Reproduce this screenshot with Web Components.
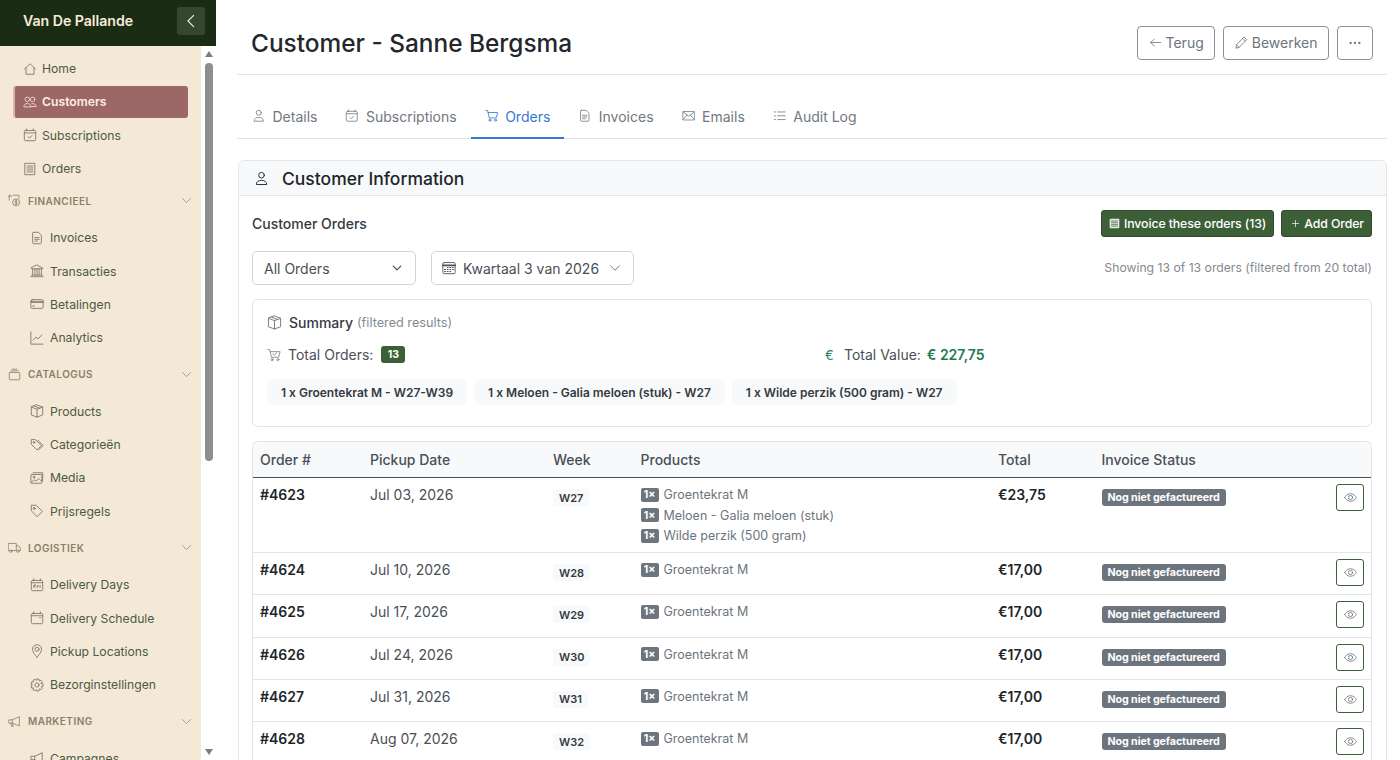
<!DOCTYPE html>
<html lang="nl">
<head>
<meta charset="utf-8">
<title>Customer - Sanne Bergsma</title>
<style>
  html, body { margin: 0; height: 100%; overflow: hidden; background: #fff; }
  body { font-family: Inter, "Liberation Sans", sans-serif; color: #212529; }
</style>
</head>
<body>
<app-shell>
  <side-bar slot="side" brand="Van De Pallande">
    <nav-item icon="house" label="Home"></nav-item>
    <nav-item icon="people" label="Customers" active></nav-item>
    <nav-item icon="calendarCheck" label="Subscriptions"></nav-item>
    <nav-item icon="receipt" label="Orders"></nav-item>
    <nav-group icon="cash" label="Financieel">
      <nav-item child icon="file" label="Invoices"></nav-item>
      <nav-item child icon="bank" label="Transacties"></nav-item>
      <nav-item child icon="card" label="Betalingen"></nav-item>
      <nav-item child icon="graph" label="Analytics"></nav-item>
    </nav-group>
    <nav-group icon="collection" label="Catalogus">
      <nav-item child icon="box" label="Products"></nav-item>
      <nav-item child icon="tags" label="Categorieën"></nav-item>
      <nav-item child icon="images" label="Media"></nav-item>
      <nav-item child icon="tag" label="Prijsregels"></nav-item>
    </nav-group>
    <nav-group icon="truck" label="Logistiek">
      <nav-item child icon="calendarDay" label="Delivery Days"></nav-item>
      <nav-item child icon="calendarEvent" label="Delivery Schedule"></nav-item>
      <nav-item child icon="geo" label="Pickup Locations"></nav-item>
      <nav-item child icon="gear" label="Bezorginstellingen"></nav-item>
    </nav-group>
    <nav-group icon="megaphone" label="Marketing">
      <nav-item child icon="megaphone" label="Campagnes"></nav-item>
    </nav-group>
  </side-bar>

  <page-header title="Customer - Sanne Bergsma">
    <out-button icon="arrowLeft" label="Terug"></out-button>
    <out-button icon="pencil" label="Bewerken"></out-button>
    <out-button icon="dots"></out-button>
  </page-header>

  <tab-bar>
    <tab-link icon="person" label="Details"></tab-link>
    <tab-link icon="calendarCheck" label="Subscriptions"></tab-link>
    <tab-link icon="cart" label="Orders" active></tab-link>
    <tab-link icon="file" label="Invoices"></tab-link>
    <tab-link icon="envelope" label="Emails"></tab-link>
    <tab-link icon="list" label="Audit Log"></tab-link>
  </tab-bar>

  <info-card title="Customer Information">
    <orders-toolbar></orders-toolbar>
    <orders-filter></orders-filter>
    <orders-summary></orders-summary>
    <orders-table>
      <order-row number="#4623" date="Jul 03, 2026" week="W27" total="€23,75" products="Groentekrat M|Meloen - Galia meloen (stuk)|Wilde perzik (500 gram)"></order-row>
      <order-row number="#4624" date="Jul 10, 2026" week="W28" total="€17,00" products="Groentekrat M"></order-row>
      <order-row number="#4625" date="Jul 17, 2026" week="W29" total="€17,00" products="Groentekrat M"></order-row>
      <order-row number="#4626" date="Jul 24, 2026" week="W30" total="€17,00" products="Groentekrat M"></order-row>
      <order-row number="#4627" date="Jul 31, 2026" week="W31" total="€17,00" products="Groentekrat M"></order-row>
      <order-row number="#4628" date="Aug 07, 2026" week="W32" total="€17,00" products="Groentekrat M"></order-row>
    </orders-table>
  </info-card>
</app-shell>

<script>
// gear outline, easier to compute than to write by hand
function gearPath(teeth) {
  const pts = [];
  for (let i = 0; i < teeth; i++) {
    const step = (Math.PI * 2) / teeth;
    const a = i * step;
    const spots = [[-0.3, 5.2], [-0.17, 7], [0.17, 7], [0.3, 5.2]];
    for (const [off, r] of spots) {
      const x = 8 + Math.cos(a + off * step * 1.6) * r;
      const y = 8 + Math.sin(a + off * step * 1.6) * r;
      pts.push(`${x.toFixed(2)} ${y.toFixed(2)}`);
    }
  }
  return `M${pts.join("L")}z`;
}

const ICONS = {
  house: '<path d="M1.8 8 8 2l6.2 6M3.4 6.6V14h9.2V6.6"/>',
  people: '<circle cx="5" cy="5" r="2.6"/><circle cx="11" cy="5" r="2.6"/><path d="M1 13.2c0-2.2 1.6-3.4 4-3.4s4 1.2 4 3.4zM10 9.9c3-.4 5 1 5 3.3h-6"/>',
  calendarCheck: '<rect x="1.5" y="2.8" width="13" height="11.7" rx="1.4"/><path d="M1.5 5.6h13M4.2 1v2M11.8 1v2M5.8 10l1.6 1.5 2.8-2.8"/>',
  receipt: '<path d="M2.5 1.5h11v13h-11z"/><path d="M4.6 4.5h6.8M4.6 6.8h6.8M4.6 9.1h6.8M4.6 11.4h6.8"/>',
  cash: '<path d="M6 1.5h7.5v4M1.5 7.5V1.5H3M.8 3.4 2.6 1.5l1.8 1.9"/><circle cx="10" cy="10.3" r="4.3"/><path d="M11 8.6c-1-.6-2.2-.2-2.2.7 0 1.3 2.4.7 2.4 2 0 .9-1.3 1.2-2.4.6M10 7.5v5.6"/>',
  file: '<path d="M4 1.5h5.6L13 4.9v8.6a1 1 0 0 1-1 1H4a1 1 0 0 1-1-1v-11a1 1 0 0 1 1-1z"/><path d="M5.5 7.5h5M5.5 9.5h5M5.5 11.5h3"/>',
  bank: '<path d="M8 1.2 14.5 4.5v1h-13v-1zM3 5.5v7M5.6 5.5v7M8 5.500v7M10.4 5.5v7M13 5.5v7M2 12.7h12M1 14.5h14"/>',
  card: '<rect x="1" y="3" width="14" height="10" rx="1.5"/><path d="M1 6.2h14M1 5h14M3 10.3h2"/>',
  graph: '<path d="M1 1v14h14M3.5 10.5 6.8 7l2.4 2 4.3-4.6"/>',
  collection: '<rect x="1.5" y="5.5" width="13" height="9" rx="1"/><path d="M3.5 3.5h9M5 1.500h6"/>',
  box: '<path d="M8 1 14.5 3.500v9L8 15l-6.500-2.500v-9z"/><path d="M1.500 3.500 8 6l6.500-2.500M8 6v9M4.800 2.300l6.400 2.500"/>',
  tags: '<path d="M1.500 2.200v5l6.500 6.500 5-5-6.500-6.500z"/><circle cx="4.500" cy="5" r="1"/><path d="M9 2.500l6 6-5 5"/>',
  images: '<rect x="1" y="4" width="12.500" height="10" rx="1"/><path d="M3.500 2h11v9.500"/><circle cx="4.500" cy="7" r="1"/><path d="M1.500 13l3.500-3 2 1.500 3-3 3 3"/>',
  tag: '<path d="M1.500 1.800v6l6.700 6.700 6-6L7.500 1.800z"/><circle cx="4.800" cy="5" r="1.200"/>',
  truck: '<path d="M.8 3h9.400v8.800H.8zM10.200 6h2.800l2.200 2.600v3.200h-5"/><circle cx="3.500" cy="12.500" r="1.500" fill="#f4e9d6"/><circle cx="12" cy="12.500" r="1.500" fill="#f4e9d6"/>',
  calendarDay: '<rect x="1.500" y="2.800" width="13" height="11.700" rx="1.400"/><path d="M1.500 5.400h13M4.200 1v2M11.800 1v2M4.500 11V8h2M4.500 9.400h1.600M8.300 11V8.800h1.500M11.500 8.500V11"/>',
  calendarEvent: '<rect x="1.500" y="2.800" width="13" height="11.700" rx="1.400"/><path d="M1.500 5.400h13M4.200 1v2M11.800 1v2M11 7.600h1"/>',
  geo: '<path d="M8 15S2.800 9.800 2.800 6a5.200 5.200 0 0 1 10.400 0C13.200 9.800 8 15 8 15z"/><circle cx="8" cy="6" r="2.300"/>',
  gear: `<circle cx="8" cy="8" r="2.400"/><path d="${gearPath(9)}"/>`,
  megaphone: '<path d="M1.500 6h3.800l8.700-4v11.500L5.300 10H1.500zM5.300 6v4M3.500 10.200l1 3.800h2L5.600 10.500"/>',
  person: '<circle cx="8" cy="4.500" r="3"/><path d="M2.500 14c0-2.800 2.400-4 5.500-4s5.500 1.200 5.500 4z"/>',
  cart: '<path d="M1 1.800h2.100l2 8.800h8.200l1.700-6.400H3.700"/><circle cx="5.800" cy="13.300" r="1.200"/><circle cx="12.400" cy="13.300" r="1.200"/>',
  cartCheck: '<path d="M1 1.800h2.100l2 8.800h8.200l1.700-6.400H3.700M6.800 6.700l1.500 1.500 2.700-2.500"/><circle cx="5.800" cy="13.300" r="1.200"/><circle cx="12.400" cy="13.300" r="1.200"/>',
  envelope: '<rect x="1" y="3" width="14" height="10" rx="1"/><path d="M1.300 3.500 8 8.600l6.700-5.100M1.300 12.500 6 7.200M14.700 12.500 10 7.200"/>',
  list: '<path d="M5.500 3.500h9M5.500 8h9M5.500 12.500h9M1.500 3.500h1.500M1.500 8h1.500M1.500 12.500h1.500"/>',
  arrowLeft: '<path d="M14.500 8H2M6.500 3.800 2 8l4.500 4.200"/>',
  pencil: '<path d="M11.500 1.500 14.500 4.500 5 14l-4 1 1-4zM9.700 3.300l3 3M2 11l3 3"/>',
  dots: '<circle cx="3" cy="8" r="1.300" fill="currentColor" stroke="none"/><circle cx="8" cy="8" r="1.300" fill="currentColor" stroke="none"/><circle cx="13" cy="8" r="1.300" fill="currentColor" stroke="none"/>',
  ledger: '<rect x="1" y="1" width="14" height="14" rx="1.500" fill="#e4ebe2" stroke="none"/><path d="M3.500 4.300h9M3.500 6.800h9M3.500 9.300h9M3.500 11.800h9" stroke="#3c5f38"/>',
  plus: '<path d="M8 3.500v9M3.500 8h9"/>',
  calendar3: '<rect x="1" y="1.800" width="14" height="12.700" rx="1.400"/><path d="M1 5h14" stroke-width="2"/><path d="M6 7.500h1M9 7.500h1M12 7.500h1M3 9.800h1M6 9.800h1M9 9.800h1M12 9.800h1M3 12h1M6 12h1M9 12h1" stroke-width="1.200"/>',
  chevronDown: '<path d="M2 5l6 6 6-6"/>',
  chevronDownBold: '<path d="M3 5.500 8 10.500l5-5" stroke-width="1.700"/>',
  chevronLeft: '<path d="M11 1.500 4.500 8l6.500 6.500" stroke-width="1.300"/>',
  eye: '<path d="M.8 8S3.400 3.300 8 3.300 15.200 8 15.200 8 12.600 12.700 8 12.700.8 8 .8 8z"/><circle cx="8" cy="8" r="2.600"/>'
};

class XIcon extends HTMLElement {
  connectedCallback() {
    const size = this.getAttribute("size") || 14;
    if (!this.shadowRoot) this.attachShadow({ mode: "open" });
    this.shadowRoot.innerHTML = `
      <style>
        :host { display: inline-flex; flex: none; width: ${size}px; height: ${size}px; }
        svg { width: 100%; height: 100%; fill: none; stroke: currentColor; stroke-width: 1; stroke-linecap: round; stroke-linejoin: round; }
      </style>
      <svg viewBox="0 0 16 16" aria-hidden="true">${ICONS[this.getAttribute("name")] || ""}</svg>`;
  }
}
customElements.define("x-icon", XIcon);

// small helper, every element below just sets its own shadow markup
class Base extends HTMLElement {
  render(html) {
    if (!this.shadowRoot) this.attachShadow({ mode: "open" });
    this.shadowRoot.innerHTML = html;
  }
  attr(name) {
    return this.getAttribute(name) || "";
  }
}

class AppShell extends Base {
  connectedCallback() {
    this.render(`
      <style>
        :host { display: grid; grid-template-columns: 216px 1fr; height: 100vh; overflow: hidden; }
        main { padding: 0 13px 0 21px; min-width: 0; overflow: hidden; }
      </style>
      <slot name="side"></slot>
      <main><slot></slot></main>`);
  }
}
customElements.define("app-shell", AppShell);

class SideBar extends Base {
  connectedCallback() {
    this.render(`
      <style>
        :host { display: flex; flex-direction: column; height: 100vh; overflow: hidden; background: #fff; }
        header { flex: none; height: 46px; box-sizing: border-box; background: #1b2c15; display: flex; align-items: center; justify-content: space-between; padding: 0 11px 5px 23px; }
        b { font-size: 14.200px; font-weight: 600; color: #f6ecd9; letter-spacing: -.05px; }
        button { width: 28px; height: 28px; border: 0; padding: 0; border-radius: 3px; background: #35472f; color: #f6ecd9; display: grid; place-items: center; }
        .body { flex: 1; min-height: 0; display: flex; }
        nav { width: 201px; flex: none; box-sizing: border-box; background: #f4e9d6; overflow: hidden; padding-top: 6px; }
        .bar { flex: 1; display: flex; flex-direction: column; align-items: center; padding: 5px 1px 5px 2px; gap: 6px; }
        .thumb { width: 8px; height: 398px; background: #8e8e8e; border-radius: 4px; }
        .tri { width: 0; height: 0; border-left: 4.500px solid transparent; border-right: 4.500px solid transparent; }
        .up { border-bottom: 6px solid #7d7d7d; }
        .down { border-top: 6px solid #7d7d7d; margin-top: auto; }
      </style>
      <header><b>${this.attr("brand")}</b><button aria-label="Collapse"><x-icon name="chevronLeft" size="14"></x-icon></button></header>
      <div class="body">
        <nav><slot></slot></nav>
        <div class="bar"><span class="tri up"></span><span class="thumb"></span><span class="tri down"></span></div>
      </div>`);
  }
}
customElements.define("side-bar", SideBar);

class NavItem extends Base {
  connectedCallback() {
    const child = this.hasAttribute("child");
    this.render(`
      <style>
        :host { display: block; height: 33.300px; box-sizing: border-box; padding: 1px 13px 1px ${child ? 30 : 13}px; }
        a { display: flex; align-items: center; gap: ${child ? 6 : 5}px; height: 31.300px; box-sizing: border-box; padding-left: ${child ? 0 : 10}px; font-size: 12.200px; color: #4c5a44; border-radius: 3px; }
        x-icon { color: #7d7767; }
        :host([active]) a { background: #9d6667; color: #fbf1e2; font-weight: 600; border-left: 2px solid #d9b6ac; padding-left: 8px; }
        :host([active]) x-icon { color: #f0dcd0; }
      </style>
      <a><x-icon name="${this.attr("icon")}" size="14"></x-icon><span>${this.attr("label")}</span></a>`);
  }
}
customElements.define("nav-item", NavItem);

class NavGroup extends Base {
  connectedCallback() {
    this.render(`
      <style>
        :host { display: block; }
        .head { height: 31px; margin-bottom: 5px; display: flex; align-items: center; padding: 0 9px 0 8px; gap: 7px; font-size: 10px; font-weight: 600; letter-spacing: .45px; color: #8c7e69; text-transform: uppercase; }
        .head span { flex: 1; }
        .items { padding-bottom: 4.300px; }
      </style>
      <div class="head"><x-icon name="${this.attr("icon")}" size="13"></x-icon><span>${this.attr("label")}</span><x-icon name="chevronDown" size="11"></x-icon></div>
      <div class="items"><slot></slot></div>`);
  }
}
customElements.define("nav-group", NavGroup);

class PageHeader extends Base {
  connectedCallback() {
    this.render(`
      <style>
        :host { display: flex; align-items: center; justify-content: space-between; height: 75px; box-sizing: border-box; padding: 11px 14px 0 14px; border-bottom: 1px solid #e3e5e7; margin-bottom: 23px; }
        h1 { margin: 0; font-size: 24.400px; font-weight: 500; color: #23272b; }
        div { display: flex; gap: 8px; }
      </style>
      <h1>${this.attr("title")}</h1>
      <div><slot></slot></div>`);
  }
}
customElements.define("page-header", PageHeader);

class OutButton extends Base {
  connectedCallback() {
    const label = this.attr("label");
    this.render(`
      <style>
        :host { display: inline-flex; align-items: center; justify-content: center; gap: 4px; height: 34px; box-sizing: border-box; padding: 0 ${label ? 10.5 : 10}px; border: 1px solid #8d9195; border-radius: 4px; font-size: 14px; color: #6c757d; }
      </style>
      <x-icon name="${this.attr("icon")}" size="${label ? 13 : 14}"></x-icon>${label ? `<span>${label}</span>` : ""}`);
  }
}
customElements.define("out-button", OutButton);

class TabBar extends Base {
  connectedCallback() {
    this.render(`
      <style>
        :host { display: flex; height: 40px; margin-bottom: 21px; padding-left: 1px; border-bottom: 1px solid #dee2e6; }
      </style>
      <slot></slot>`);
  }
}
customElements.define("tab-bar", TabBar);

class TabLink extends Base {
  connectedCallback() {
    this.render(`
      <style>
        :host { display: flex; align-items: center; gap: 7px; height: 41px; box-sizing: border-box; padding: 0 14px 5px; font-size: 14px; color: #70777e; }
        :host([active]) { color: #3478d4; border-bottom: 2px solid #3478d4; padding-bottom: 3px; }
        x-icon { color: #7b8187; }
        :host([active]) x-icon { color: #3478d4; }
      </style>
      <x-icon name="${this.attr("icon")}" size="13.500"></x-icon><span>${this.attr("label")}</span>`);
  }
}
customElements.define("tab-link", TabLink);

class InfoCard extends Base {
  connectedCallback() {
    this.render(`
      <style>
        :host { display: block; margin-left: 1px; border: 1px solid #e3e5e7; border-radius: 6px; }
        header { height: 34px; background: #f8f9fa; border-bottom: 1px solid #e3e5e7; border-radius: 6px 6px 0 0; display: flex; align-items: center; gap: 13px; padding: 0 0 0 15px; font-size: 17.500px; font-weight: 500; color: #212529; }
        .body { padding: 14px 14px 0 13px; }
      </style>
      <header><x-icon name="person" size="15"></x-icon><span>${this.attr("title")}</span></header>
      <div class="body"><slot></slot></div>`);
  }
}
customElements.define("info-card", InfoCard);

class OrdersToolbar extends Base {
  connectedCallback() {
    this.render(`
      <style>
        :host { display: flex; justify-content: space-between; align-items: center; height: 27px; margin-bottom: 14px; }
        strong { font-size: 14px; font-weight: 500; color: #343a40; }
        div { display: flex; gap: 7px; }
        span { display: inline-flex; align-items: center; height: 27px; box-sizing: border-box; padding: 0 7px 1px 7px; gap: 4px; background: #3c5f38; border: 1px solid #2f4c2c; border-radius: 3px; color: #fff; font-size: 12.300px; font-weight: 500; letter-spacing: -.1px; }
        span.add { padding: 0 7px 1px 8px; gap: 3px; }
      </style>
      <strong>Customer Orders</strong>
      <div>
        <span><x-icon name="ledger" size="11"></x-icon>Invoice these orders (13)</span>
        <span class="add"><x-icon name="plus" size="11"></x-icon>Add Order</span>
      </div>`);
  }
}
customElements.define("orders-toolbar", OrdersToolbar);

class OrdersFilter extends Base {
  connectedCallback() {
    this.render(`
      <style>
        :host { display: flex; align-items: center; gap: 15px; height: 34px; margin-bottom: 14px; }
        .sel { display: flex; align-items: center; height: 34px; box-sizing: border-box; border: 1px solid #ced4da; border-radius: 5px; font-size: 14px; color: #495057; }
        .a { width: 164px; padding: 0 12px 0 11px; justify-content: space-between; }
        .b { width: 203px; padding: 0 12px 0 10px; gap: 7px; }
        .b span { flex: 1; }
        .note { margin-left: auto; padding-bottom: 2px; font-size: 12.200px; color: #858a8f; }
      </style>
      <div class="sel a"><span>All Orders</span><x-icon name="chevronDownBold" size="12"></x-icon></div>
      <div class="sel b"><x-icon name="calendar3" size="14"></x-icon><span>Kwartaal 3 van 2026</span><x-icon name="chevronDown" size="12"></x-icon></div>
      <div class="note">Showing 13 of 13 orders (filtered from 20 total)</div>`);
  }
}
customElements.define("orders-filter", OrdersFilter);

class OrdersSummary extends Base {
  connectedCallback() {
    const chips = ["1 x Groentekrat M - W27-W39", "1 x Meloen - Galia meloen (stuk) - W27", "1 x Wilde perzik (500 gram) - W27"];
    this.render(`
      <style>
        :host { display: block; box-sizing: border-box; height: 128px; border: 1px solid #e3e5e7; border-radius: 6px; padding: 14px 14px 0; margin-bottom: 14px; }
        .title { display: flex; align-items: center; gap: 7px; height: 17px; font-size: 14px; font-weight: 500; color: #343a40; margin-bottom: 15px; }
        .title small { font-size: 12.700px; font-weight: 400; color: #858a8f; margin-left: -3px; }
        .totals { display: grid; grid-template-columns: 1fr 1fr; height: 17px; margin-bottom: 16px; }
        .totals div { display: flex; align-items: center; gap: 7px; font-size: 14px; color: #495057; }
        .totals div + div { padding-left: 13px; gap: 6px; }
        .euro { color: #2d8259; width: 13px; font-size: 13px; }
        .num { background: #3c5f38; color: #fff; font-size: 10.500px; font-weight: 700; height: 17px; width: 24px; margin-left: 1px; border-radius: 3px; display: grid; place-items: center; }
        .val { color: #1f7a50; font-weight: 600; }
        x-icon { color: #6f7780; }
        .cart { color: #7d8a78; }
        .chips { display: flex; gap: 7px; }
        .chips span { height: 26px; padding: 0 14px; display: flex; align-items: center; background: #f8f9fa; border-radius: 5px; font-size: 12px; font-weight: 600; color: #343a40; white-space: nowrap; }
      </style>
      <div class="title"><x-icon name="box" size="15"></x-icon><span>Summary</span><small>(filtered results)</small></div>
      <div class="totals">
        <div><x-icon class="cart" name="cartCheck" size="14"></x-icon><span>Total Orders:</span><span class="num">13</span></div>
        <div><span class="euro">€</span><span>Total Value:</span><span class="val">€ 227,75</span></div>
      </div>
      <div class="chips">${chips.map((c) => `<span>${c}</span>`).join("")}</div>`);
  }
}
customElements.define("orders-summary", OrdersSummary);

const ROW_COLUMNS = "110px 183px 87.500px 357.500px 103.500px 1fr";

class OrdersTable extends Base {
  connectedCallback() {
    this.render(`
      <style>
        :host { display: block; border: 1px solid #e3e5e7; border-bottom: 0; border-radius: 6px 6px 0 0; }
        .head { display: grid; grid-template-columns: ${ROW_COLUMNS}; height: 35px; align-items: center; padding-left: 7px; background: #f8f9fa; border-bottom: 1px solid #495057; border-radius: 6px 6px 0 0; font-size: 14px; font-weight: 500; color: #495057; }
      </style>
      <div class="head"><span>Order #</span><span>Pickup Date</span><span>Week</span><span>Products</span><span>Total</span><span>Invoice Status</span></div>
      <slot></slot>`);
  }
}
customElements.define("orders-table", OrdersTable);

class OrderRow extends Base {
  connectedCallback() {
    const products = this.attr("products").split("|");
    this.render(`
      <style>
        :host { display: grid; grid-template-columns: ${ROW_COLUMNS}; align-items: start; box-sizing: border-box; min-height: 42.300px; padding: 7px 0 8px 7px; border-bottom: 1px solid #e3e5e7; font-size: 14px; color: #495057; }
        .no { font-weight: 600; color: #212529; padding-top: 1px; }
        .date { padding-top: 1px; }
        .week { justify-self: start; margin: 4px 0 0; padding: 0 6px; height: 17px; display: flex; align-items: center; background: #f8f9fa; border-radius: 3px; font-size: 11px; font-weight: 600; color: #343a40; }
        .products { display: flex; flex-direction: column; gap: 3.500px; padding-top: 1px; }
        .products div { display: flex; align-items: center; height: 17px; gap: 5px; font-size: 12.500px; color: #6c757d; }
        .qty { width: 18px; height: 14px; background: #6c757d; color: #fff; border-radius: 2px; font-size: 10.500px; font-weight: 700; display: grid; place-items: center; }
        .total { font-weight: 600; color: #212529; padding-top: 1px; }
        .status { display: flex; justify-content: space-between; align-items: flex-start; padding-right: 7px; }
        .pill { margin-top: 4px; height: 17px; padding: 0 6px; display: flex; align-items: center; background: #6c757d; color: #fff; border-radius: 3px; font-size: 10.700px; font-weight: 700; letter-spacing: -.1px; }
        .eye { width: 28px; height: 27px; box-sizing: border-box; margin-top: -1px; border: 1px solid #3c5f38; border-radius: 3px; display: grid; place-items: center; color: #6c757d; }
      </style>
      <span class="no">${this.attr("number")}</span>
      <span class="date">${this.attr("date")}</span>
      <span class="week">${this.attr("week")}</span>
      <div class="products">${products.map((p) => `<div><span class="qty">1×</span><span>${p}</span></div>`).join("")}</div>
      <span class="total">${this.attr("total")}</span>
      <div class="status"><span class="pill">Nog niet gefactureerd</span><span class="eye"><x-icon name="eye" size="13"></x-icon></span></div>`);
  }
}
customElements.define("order-row", OrderRow);
</script>
</body>
</html>
